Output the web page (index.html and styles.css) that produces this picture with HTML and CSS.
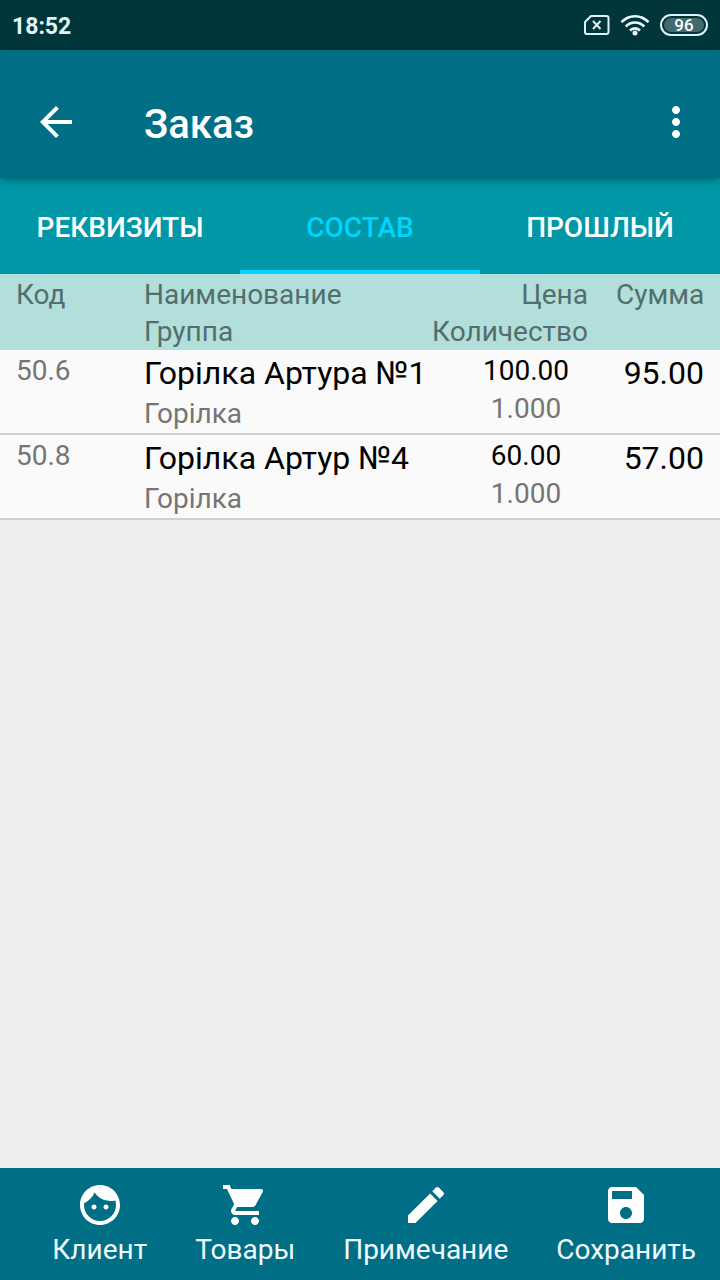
FILE: index.html
```html
<!DOCTYPE html>
<html lang="ru">
<head>
<meta charset="utf-8">
<meta name="viewport" content="width=device-width, initial-scale=1">
<title>Заказ</title>
<link rel="stylesheet" href="styles.css">
</head>
<body>
<div class="screen">
  <div class="status">
    <time class="status-time">18:52</time>
    <div class="status-icons">
      <svg width="26" height="20" viewBox="0 0 26 20" fill="none" stroke="#dff1f5" stroke-width="2" stroke-linejoin="round" aria-hidden="true"><path d="M7 1h15.500a2 2 0 0 1 2 2v14a2 2 0 0 1-2 2h-19.500a2 2 0 0 1-2-2V7z"/><path d="M9 6l7.500 8M16.500 6L9 14"/></svg>
      <svg width="30" height="22" viewBox="0 0 30 22" fill="none" stroke="#eafaff" stroke-width="2.600" aria-hidden="true"><path d="M1.500 8.200C9 .2 21 .2 28.500 8.200M5.800 12.500c5-5.300 13.400-5.300 18.400 0M10 16.500c2.800-2.900 7.200-2.900 10 0"/><circle cx="15" cy="19" r="2.500" fill="#eafaff" stroke="none"/></svg>
      <span class="battery"><span class="battery-level">96</span></span>
    </div>
  </div>

  <header class="appbar">
    <button class="icon-button" type="button" aria-label="Назад">
      <svg class="icon" viewBox="0 0 24 24" aria-hidden="true"><path d="M20 11H7.830l5.590-5.590L12 4l-8 8 8 8 1.410-1.410L7.830 13H20v-2z"/></svg>
    </button>
    <h1 class="title">Заказ</h1>
    <button class="icon-button" type="button" aria-label="Меню">
      <svg class="icon" viewBox="0 0 24 24" aria-hidden="true"><path d="M12 8c1.100 0 2-.9 2-2s-.9-2-2-2-2 .9-2 2 .9 2 2 2zm0 2c-1.100 0-2 .9-2 2s.9 2 2 2 2-.9 2-2-.9-2-2-2zm0 6c-1.100 0-2 .9-2 2s.9 2 2 2 2-.9 2-2-.9-2-2-2z"/></svg>
    </button>
  </header>

  <div class="tabs" role="tablist">
    <button class="tab" type="button" role="tab" aria-selected="false">РЕКВИЗИТЫ</button>
    <button class="tab tab-active" type="button" role="tab" aria-selected="true">СОСТАВ</button>
    <button class="tab" type="button" role="tab" aria-selected="false">ПРОШЛЫЙ</button>
  </div>

  <main class="content">
    <table class="items">
      <thead>
        <tr>
          <th class="code">Код</th>
          <th class="name"><div>Наименование</div><div>Группа</div></th>
          <th class="price"><div>Цена</div><div>Количество</div></th>
          <th class="sum">Сумма</th>
        </tr>
      </thead>
      <tbody>
        <tr>
          <td class="code">50.6</td>
          <td class="name"><div class="product">Горілка Артура №1</div><div class="muted">Горілка</div></td>
          <td class="price"><div>100.00</div><div class="muted">1.000</div></td>
          <td class="sum">95.00</td>
        </tr>
        <tr>
          <td class="code">50.8</td>
          <td class="name"><div class="product">Горілка Артур №4</div><div class="muted">Горілка</div></td>
          <td class="price"><div>60.00</div><div class="muted">1.000</div></td>
          <td class="sum">57.00</td>
        </tr>
      </tbody>
    </table>
  </main>

  <nav class="actions">
    <button class="action" type="button">
      <svg class="icon" viewBox="0 0 24 24" aria-hidden="true"><path d="M9 11.750c-.69 0-1.250.56-1.250 1.250s.56 1.250 1.250 1.250 1.250-.56 1.250-1.250-.56-1.250-1.250-1.250zm6 0c-.69 0-1.250.56-1.250 1.250s.56 1.250 1.250 1.250 1.250-.56 1.250-1.250-.56-1.250-1.250-1.250zM12 2C6.480 2 2 6.480 2 12s4.480 10 10 10 10-4.480 10-10S17.520 2 12 2zm0 18c-4.410 0-8-3.590-8-8 0-.29.02-.58.05-.86 2.360-1.050 4.230-2.980 5.210-5.370C11.070 8.330 14.050 10 17.420 10c.78 0 1.530-.09 2.250-.26.21.71.33 1.470.33 2.260 0 4.410-3.590 8-8 8z"/></svg>
      Клиент
    </button>
    <button class="action" type="button">
      <svg class="icon" viewBox="0 0 24 24" aria-hidden="true"><path d="M7 18c-1.100 0-1.990.9-1.990 2S5.900 22 7 22s2-.9 2-2-.9-2-2-2zM1 2v2h2l3.600 7.590-1.350 2.450c-.16.28-.25.61-.25.96 0 1.100.9 2 2 2h12v-2H7.420c-.14 0-.25-.11-.25-.25l.03-.12.900-1.630h7.450c.75 0 1.410-.41 1.750-1.030l3.580-6.490c.08-.14.12-.31.12-.48 0-.55-.45-1-1-1H5.210l-.94-2H1zm16 16c-1.100 0-1.990.9-1.990 2s.89 2 1.990 2 2-.9 2-2-.9-2-2-2z"/></svg>
      Товары
    </button>
    <button class="action" type="button">
      <svg class="icon" viewBox="0 0 24 24" aria-hidden="true"><path d="M3 17.250V21h3.750L17.810 9.940l-3.750-3.750L3 17.250zM20.710 7.040c.39-.39.39-1.020 0-1.410l-2.340-2.340c-.39-.39-1.020-.39-1.410 0l-1.830 1.830 3.750 3.750 1.830-1.830z"/></svg>
      Примечание
    </button>
    <button class="action" type="button">
      <svg class="icon" viewBox="0 0 24 24" aria-hidden="true"><path d="M17 3H5c-1.110 0-2 .9-2 2v14c0 1.100.89 2 2 2h14c1.100 0 2-.9 2-2V7l-4-4zm-5 16c-1.660 0-3-1.340-3-3s1.340-3 3-3 3 1.340 3 3-1.340 3-3 3zm3-10H5V5h10v4z"/></svg>
      Сохранить
    </button>
  </nav>
</div>
</body>
</html>
```
FILE: styles.css
```css
* { box-sizing: border-box; }

body {
  margin: 0;
  font-family: Roboto, "Noto Sans", sans-serif;
  font-size: 28px;
  line-height: 38px;
  color: #000;
}

button {
  margin: 0;
  padding: 0;
  border: 0;
  background: none;
  color: inherit;
  font: inherit;
}

.screen {
  display: flex;
  flex-direction: column;
  min-height: 100vh;
  background: #eee;
}

.icon {
  display: block;
  width: 48px;
  height: 48px;
  fill: #fff;
}

.status {
  display: flex;
  align-items: center;
  justify-content: space-between;
  height: 50px;
  padding: 0 12px;
  background: #00363a;
  color: #e0f3f7;
}

.status-time {
  padding-top: 4px;
  font-size: 23px;
  font-weight: 700;
  line-height: 28px;
}

.status-icons {
  display: flex;
  align-items: center;
  gap: 10px;
}

.battery {
  width: 48px;
  height: 22px;
  padding: 2px;
  border: 2px solid #e0f3f7;
  border-radius: 11px;
}

.battery-level {
  display: block;
  border-radius: 7px;
  background: #426b6f;
  color: #fff;
  font-size: 17px;
  font-weight: 500;
  line-height: 14px;
  text-align: center;
}

.appbar {
  position: relative;
  display: flex;
  align-items: center;
  height: 128px;
  padding: 16px 20px 0 32px;
  background: #006f86;
  color: #fff;
  box-shadow: 0 2px 8px rgba(0, 0, 0, 0.35);
}

.title {
  flex: 1;
  margin: 0;
  padding: 6px 0 0 64px;
  font-size: 40px;
  font-weight: 500;
  line-height: 48px;
}

.tabs {
  display: grid;
  grid-template-columns: repeat(3, 1fr);
  height: 96px;
  background: #0097a7;
  color: #fff;
}

.tab {
  padding-top: 4px;
  border: solid transparent;
  border-width: 4px 0;
  font-weight: 500;
}

.tab-active {
  border-bottom-color: #00d4ff;
  color: #00d4ff;
}

.content { flex: 1; }

.items {
  width: 100%;
  border-collapse: separate;
  border-spacing: 0;
  table-layout: fixed;
}

.items th,
.items td {
  padding: 2px 0 0;
  font-weight: 400;
  text-align: left;
  vertical-align: top;
  white-space: nowrap;
}

.items th {
  background: #b2dfdb;
  color: #546e6b;
  line-height: 37px;
}

.items td {
  border-bottom: 2px solid #d0d0d0;
  background: #fafafa;
}

.items .code {
  width: 144px;
  padding-left: 16px;
}

.items td.code,
.muted { color: #757575; }

.items td.name,
.items td.sum { padding-top: 1px; }

.product {
  font-size: 32px;
  line-height: 44px;
}

.items .price { width: 184px; }

.items th.price {
  padding-right: 28px;
  text-align: right;
}

.items td.price {
  padding-left: 4px;
  text-align: center;
}

.items .sum {
  width: 104px;
  padding-right: 16px;
  text-align: right;
}

.items td.sum {
  font-size: 32px;
  line-height: 44px;
}

.actions {
  display: flex;
  justify-content: flex-end;
  height: 112px;
  background: #006f86;
  color: #f0fbff;
}

.action {
  display: flex;
  flex-direction: column;
  align-items: center;
  justify-content: flex-start;
  gap: 2px;
  padding: 13px 24px 0;
}
```
